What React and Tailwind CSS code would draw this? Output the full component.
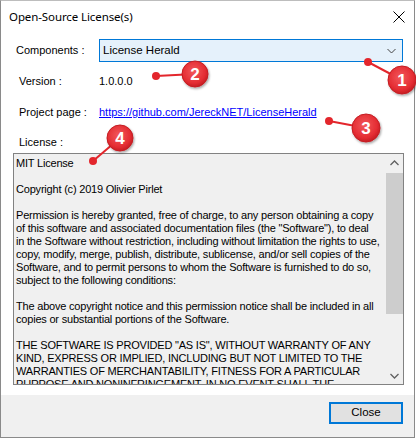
import React from "react";

const lines = [
  "MIT License",
  "",
  "Copyright (c) 2019 Olivier Pirlet",
  "",
  "Permission is hereby granted, free of charge, to any person obtaining a copy",
  'of this software and associated documentation files (the "Software"), to deal',
  "in the Software without restriction, including without limitation the rights to use,",
  "copy, modify, merge, publish, distribute, sublicense, and/or sell copies of the",
  "Software, and to permit persons to whom the Software is furnished to do so,",
  "subject to the following conditions:",
  "",
  "The above copyright notice and this permission notice shall be included in all",
  "copies or substantial portions of the Software.",
  "",
  'THE SOFTWARE IS PROVIDED "AS IS", WITHOUT WARRANTY OF ANY',
  "KIND, EXPRESS OR IMPLIED, INCLUDING BUT NOT LIMITED TO THE",
  "WARRANTIES OF MERCHANTABILITY, FITNESS FOR A PARTICULAR",
  "PURPOSE AND NONINFRINGEMENT. IN NO EVENT SHALL THE",
];

function Marker({ dot, c, r, n }) {
  return (
    <g>
      <line x1={dot[0]} y1={dot[1]} x2={c[0]} y2={c[1]} stroke="#e3262c" strokeWidth="2" />
      <circle cx={dot[0]} cy={dot[1]} r="4" fill="#e3262c" />
      <circle cx={c[0]} cy={c[1]} r={r} fill="url(#rg)" stroke="#c41d22" strokeWidth="1" filter="url(#sh)" />
      <text
        x={c[0]}
        y={c[1] + 6}
        textAnchor="middle"
        fontFamily="'Liberation Sans', Arial, sans-serif"
        fontWeight="700"
        fontSize="17"
        fill="#ffffff"
      >
        {n}
      </text>
    </g>
  );
}

export default function App() {
  return (
    <div className="relative w-[416px] h-[438px] bg-white overflow-hidden font-['Liberation_Sans',Arial,sans-serif] text-[11px] text-black">
      <div className="w-[415px] h-[438px] border border-[#8a8a8a] border-t-[#bdbdbd] flex flex-col bg-white">
        {/* title bar */}
        <div className="h-[31px] flex items-center justify-between pl-[8px] pr-[9px] shrink-0">
          <span className="font-['Noto_Sans',sans-serif] text-[11.5px] tracking-[-0.1px] leading-none">Open-Source License(s)</span>
          <svg width="12" height="12" viewBox="0 0 12 12">
            <path d="M0.5 0.5 L11.5 11.5 M11.5 0.5 L0.5 11.5" stroke="#000" strokeWidth="1" />
          </svg>
        </div>
        {/* body */}
        <div className="h-[363px] shrink-0 flex flex-col">
          <div className="mt-[7px] flex items-center h-[23px]">
            <span className="w-[98px] pl-[15px] leading-none">Components :</span>
            <div className="w-[304px] h-[23px] border border-[#0078d7] bg-[#e5f1fb] flex items-center justify-between pl-[3px] pr-[6px]">
              <span className="text-[11.5px] leading-none">License Herald</span>
              <svg width="9" height="6" viewBox="0 0 9 6">
                <path d="M0.5 1 L4.5 5 L8.5 1" fill="none" stroke="#444" strokeWidth="1" />
              </svg>
            </div>
          </div>
          <div className="mt-[12px] flex items-center h-[14px]">
            <span className="w-[98px] pl-[18px]">Version :</span>
            <span>1.0.0.0</span>
          </div>
          <div className="mt-[17px] flex items-center h-[14px]">
            <span className="w-[98px] pl-[18px]">Project page :</span>
            <span className="text-[#0000ff] underline">https://github.com/JereckNET/LicenseHerald</span>
          </div>
          <div className="mt-[16px] flex items-center h-[14px]">
            <span className="pl-[18px]">License :</span>
          </div>
          <div className="mt-[4px] ml-[12px] w-[391px] h-[232px] border border-[#828282] bg-[#f0f0f0] flex overflow-hidden">
            <div className="flex-1 overflow-hidden pl-[2px] pt-[3px] whitespace-pre tracking-[-0.2px]">
              {lines.map((l, i) => (
                <div key={i} className="h-[13px] leading-[13px]">{l}</div>
              ))}
            </div>
            <div className="w-[17px] shrink-0 bg-[#f0f0f0] flex flex-col">
              <div className="h-[17px] shrink-0 flex items-center justify-center">
                <svg width="9" height="6" viewBox="0 0 9 6">
                  <path d="M0.5 5 L4.5 1 L8.5 5" fill="none" stroke="#606060" strokeWidth="1.3" />
                </svg>
              </div>
              <div className="mt-[2px] w-[17px] h-[141px] shrink-0 bg-[#cdcdcd]" />
              <div className="flex-1" />
              <div className="h-[17px] shrink-0 flex items-center justify-center">
                <svg width="9" height="6" viewBox="0 0 9 6">
                  <path d="M0.5 1 L4.5 5 L8.5 1" fill="none" stroke="#606060" strokeWidth="1.3" />
                </svg>
              </div>
            </div>
          </div>
        </div>
        {/* footer */}
        <div className="flex-1 bg-[#f0f0f0] flex justify-end items-start pr-[11px] pt-[7px]">
          <button className="w-[74px] h-[22px] border-2 border-[#0078d7] bg-[#e1e1e1] text-[11.5px] leading-none flex items-center justify-center">
            Close
          </button>
        </div>
      </div>
      <svg className="absolute inset-0 pointer-events-none" width="416" height="438">
        <defs>
          <radialGradient id="rg" cx="45%" cy="40%" r="60%">
            <stop offset="0%" stopColor="#f2585c" />
            <stop offset="75%" stopColor="#e42c32" />
            <stop offset="100%" stopColor="#c51e24" />
          </radialGradient>
          <filter id="sh" x="-30%" y="-30%" width="160%" height="160%">
            <feDropShadow dx="1" dy="1.5" stdDeviation="1.2" floodColor="#000" floodOpacity="0.35" />
          </filter>
        </defs>
        <Marker dot={[368, 62]} c={[402, 80]} r={14} n="1" />
        <Marker dot={[156, 76]} c={[195, 74]} r={13} n="2" />
        <Marker dot={[329, 121]} c={[366, 128]} r={14} n="3" />
        <Marker dot={[93, 161]} c={[120, 138]} r={13} n="4" />
      </svg>
    </div>
  );
}
